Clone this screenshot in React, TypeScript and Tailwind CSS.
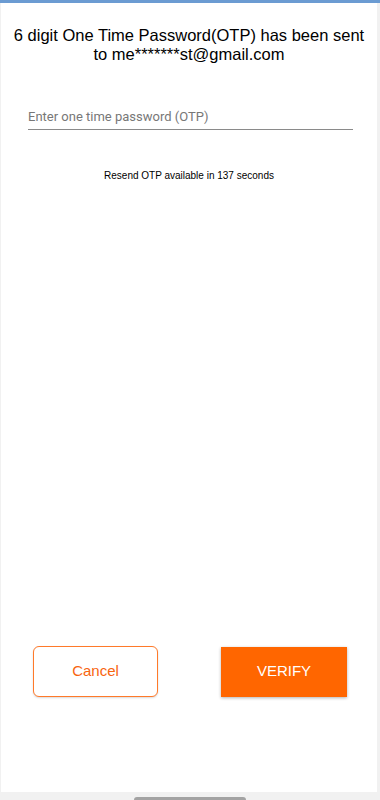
import { useState } from 'react'

export default function App() {
  const [otp, setOtp] = useState('')
  const seconds = 137

  return (
    <div className="flex h-[800px] w-[380px] flex-col bg-[#f1f1f1] font-['Liberation_Sans',Arial,sans-serif]">
      <div className="h-[3px] w-full bg-[#6b9bd2]" />
      <div className="mx-[1px] mr-[3px] flex h-[789px] flex-col bg-white">
        <p className="mt-[23px] whitespace-nowrap text-center text-[16.5px] leading-[19px] text-black">
          6 digit One Time Password(OTP) has been sent
          <br />
          to me*******st@gmail.com
        </p>

        <div className="mx-[27px] mt-[43px] w-[325px]">
          <input
            value={otp}
            onChange={(e) => setOtp(e.target.value)}
            placeholder="Enter one time password (OTP)"
            className="block h-[23px] w-full border-b border-[#8a8a8a] bg-transparent pb-[3px] font-['Roboto',sans-serif] text-[13px] text-[#333] placeholder:text-[#777] focus:outline-none"
          />
        </div>

        <p className="mt-[40px] text-center text-[10px] leading-[12px] text-black">
          Resend OTP available in {seconds} seconds
        </p>

        <div className="mt-auto mb-[95px] flex items-center justify-between pl-[32px] pr-[30px]">
          <button
            type="button"
            className="h-[51px] w-[125px] rounded-[6px] border border-[#ff7a2a] bg-white text-[15px] text-[#f8650f] shadow-[0_1px_2px_rgba(0,0,0,0.15)]"
          >
            Cancel
          </button>
          <button
            type="button"
            className="h-[50px] w-[126px] bg-[#ff6600] text-[15px] text-white shadow-[0_1px_3px_rgba(0,0,0,0.3)]"
          >
            VERIFY
          </button>
        </div>
      </div>
      <div className="flex flex-1 justify-center">
        <div className="mt-auto h-[3px] w-[112px] rounded-t-sm bg-[#a3a3a3]" />
      </div>
    </div>
  )
}
